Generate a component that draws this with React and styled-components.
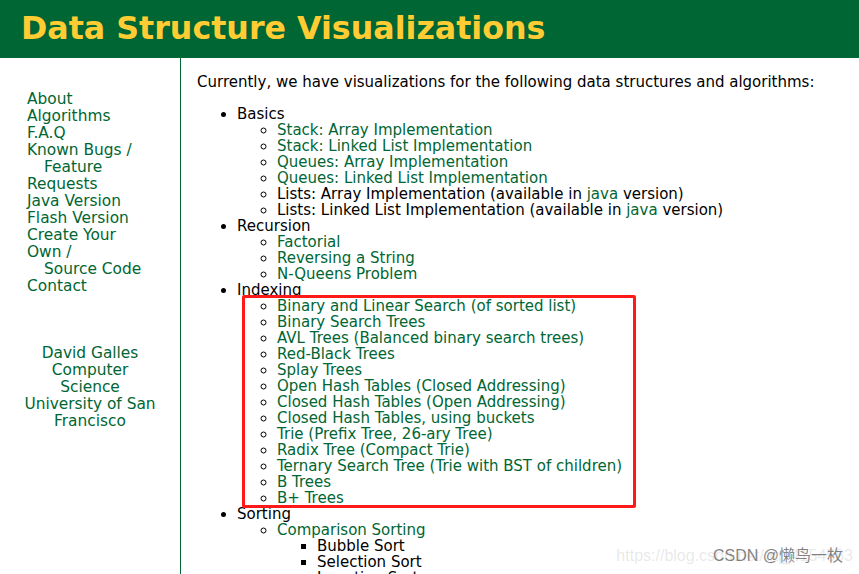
import React from "react";
import styled, { createGlobalStyle } from "styled-components";

const GlobalStyle = createGlobalStyle`
  html, body { margin: 0; padding: 0; background: #ffffff; }
  body { font-family: "DejaVu Sans", "Liberation Sans", sans-serif; }
  #root { height: 100vh; }
`;

const Page = styled.div`
  position: relative;
  height: 574px;
  overflow: hidden;
  display: flex;
  flex-direction: column;
`;

const Header = styled.header`
  background: #006633;
  height: 58px;
  flex: none;
  display: flex;
  align-items: center;
  padding-left: 21px;
`;

const Title = styled.h1`
  margin: 0;
  color: #ffcc33;
  font-family: "DejaVu Sans", Verdana, sans-serif;
  font-weight: bold;
  font-size: 31.7px;
  line-height: 1;
`;

const Body = styled.div`
  flex: 1;
  display: flex;
  min-height: 0;
`;

const Sidebar = styled.aside`
  width: 180px;
  flex: none;
  border-right: 1px solid #006633;
  padding-top: 33px;
`;

const NavList = styled.nav`
  display: flex;
  flex-direction: column;
  padding-left: 27px;
  font-size: 15.4px;
  line-height: 17px;
`;

const NavLink = styled.a`
  color: #006633;
  text-decoration: none;
  padding-left: ${(p) => (p.$indent ? "17px" : "0")};
  white-space: nowrap;
`;

const Credits = styled.div`
  margin-top: 50px;
  text-align: center;
  color: #006633;
  font-size: 15.4px;
  line-height: 17px;
`;

const Main = styled.main`
  flex: 1;
  padding-left: 16px;
  font-size: 15px;
  line-height: 16px;
  color: #000;
`;

const Intro = styled.p`
  margin: 16px 0 16px;
  white-space: nowrap;
`;

const List = styled.ul`
  margin: 0;
  padding-left: 40px;
  list-style-type: ${(p) => p.$type || "disc"};
`;

const Item = styled.li`
  white-space: nowrap;
`;

const Link = styled.a`
  color: #006633;
  text-decoration: none;
`;

const Highlight = styled.div`
  position: absolute;
  left: 242px;
  top: 295px;
  width: 388px;
  height: 207px;
  border: 3px solid #ff1a1a;
  border-radius: 2px;
  pointer-events: none;
`;

const Watermark = styled.div`
  position: absolute;
  right: 6px;
  bottom: 9px;
  font-family: "Liberation Sans", "Noto Sans CJK SC", sans-serif;
  font-size: 16px;
  line-height: 18px;
  color: rgba(120, 120, 120, 0.18);
  white-space: nowrap;
  pointer-events: none;
`;

const WatermarkBrand = styled.span`
  position: absolute;
  right: 10px;
  top: 0;
  color: rgba(90, 90, 90, 0.75);
`;

const nav = [
  { t: "About" },
  { t: "Algorithms" },
  { t: "F.A.Q" },
  { t: "Known Bugs /" },
  { t: "Feature", indent: true },
  { t: "Requests" },
  { t: "Java Version" },
  { t: "Flash Version" },
  { t: "Create Your" },
  { t: "Own /" },
  { t: "Source Code", indent: true },
  { t: "Contact" },
];

const L = ({ children }) => <Link href="#">{children}</Link>;

export default function App() {
  return (
    <>
      <GlobalStyle />
      <Page>
        <Header>
          <Title>Data Structure Visualizations</Title>
        </Header>
        <Body>
          <Sidebar>
            <NavList>
              {nav.map((n, i) => (
                <NavLink key={i} href="#" $indent={n.indent}>
                  {n.t}
                </NavLink>
              ))}
            </NavList>
            <Credits>
              David Galles
              <br />
              Computer
              <br />
              Science
              <br />
              University of San
              <br />
              Francisco
            </Credits>
          </Sidebar>
          <Main>
            <Intro>
              Currently, we have visualizations for the following data structures and algorithms:
            </Intro>
            <List>
              <Item>
                Basics
                <List $type="circle">
                  <Item><L>Stack: Array Implementation</L></Item>
                  <Item><L>Stack: Linked List Implementation</L></Item>
                  <Item><L>Queues: Array Implementation</L></Item>
                  <Item><L>Queues: Linked List Implementation</L></Item>
                  <Item>Lists: Array Implementation (available in <L>java</L> version)</Item>
                  <Item>Lists: Linked List Implementation (available in <L>java</L> version)</Item>
                </List>
              </Item>
              <Item>
                Recursion
                <List $type="circle">
                  <Item><L>Factorial</L></Item>
                  <Item><L>Reversing a String</L></Item>
                  <Item><L>N-Queens Problem</L></Item>
                </List>
              </Item>
              <Item>
                Indexing
                <List $type="circle">
                  <Item><L>Binary and Linear Search (of sorted list)</L></Item>
                  <Item><L>Binary Search Trees</L></Item>
                  <Item><L>AVL Trees (Balanced binary search trees)</L></Item>
                  <Item><L>Red-Black Trees</L></Item>
                  <Item><L>Splay Trees</L></Item>
                  <Item><L>Open Hash Tables (Closed Addressing)</L></Item>
                  <Item><L>Closed Hash Tables (Open Addressing)</L></Item>
                  <Item><L>Closed Hash Tables, using buckets</L></Item>
                  <Item><L>Trie (Prefix Tree, 26-ary Tree)</L></Item>
                  <Item><L>Radix Tree (Compact Trie)</L></Item>
                  <Item><L>Ternary Search Tree (Trie with BST of children)</L></Item>
                  <Item><L>B Trees</L></Item>
                  <Item><L>B+ Trees</L></Item>
                </List>
              </Item>
              <Item>
                Sorting
                <List $type="circle">
                  <Item>
                    <L>Comparison Sorting</L>
                    <List $type="square">
                      <Item>Bubble Sort</Item>
                      <Item>Selection Sort</Item>
                      <Item>Insertion Sort</Item>
                      <Item>Shell Sort</Item>
                    </List>
                  </Item>
                </List>
              </Item>
            </List>
          </Main>
        </Body>
        <Highlight />
        <Watermark>
          https://blog.csdn.net/qq_4154583
          <WatermarkBrand>CSDN @懒鸟一枚</WatermarkBrand>
        </Watermark>
      </Page>
    </>
  );
}
